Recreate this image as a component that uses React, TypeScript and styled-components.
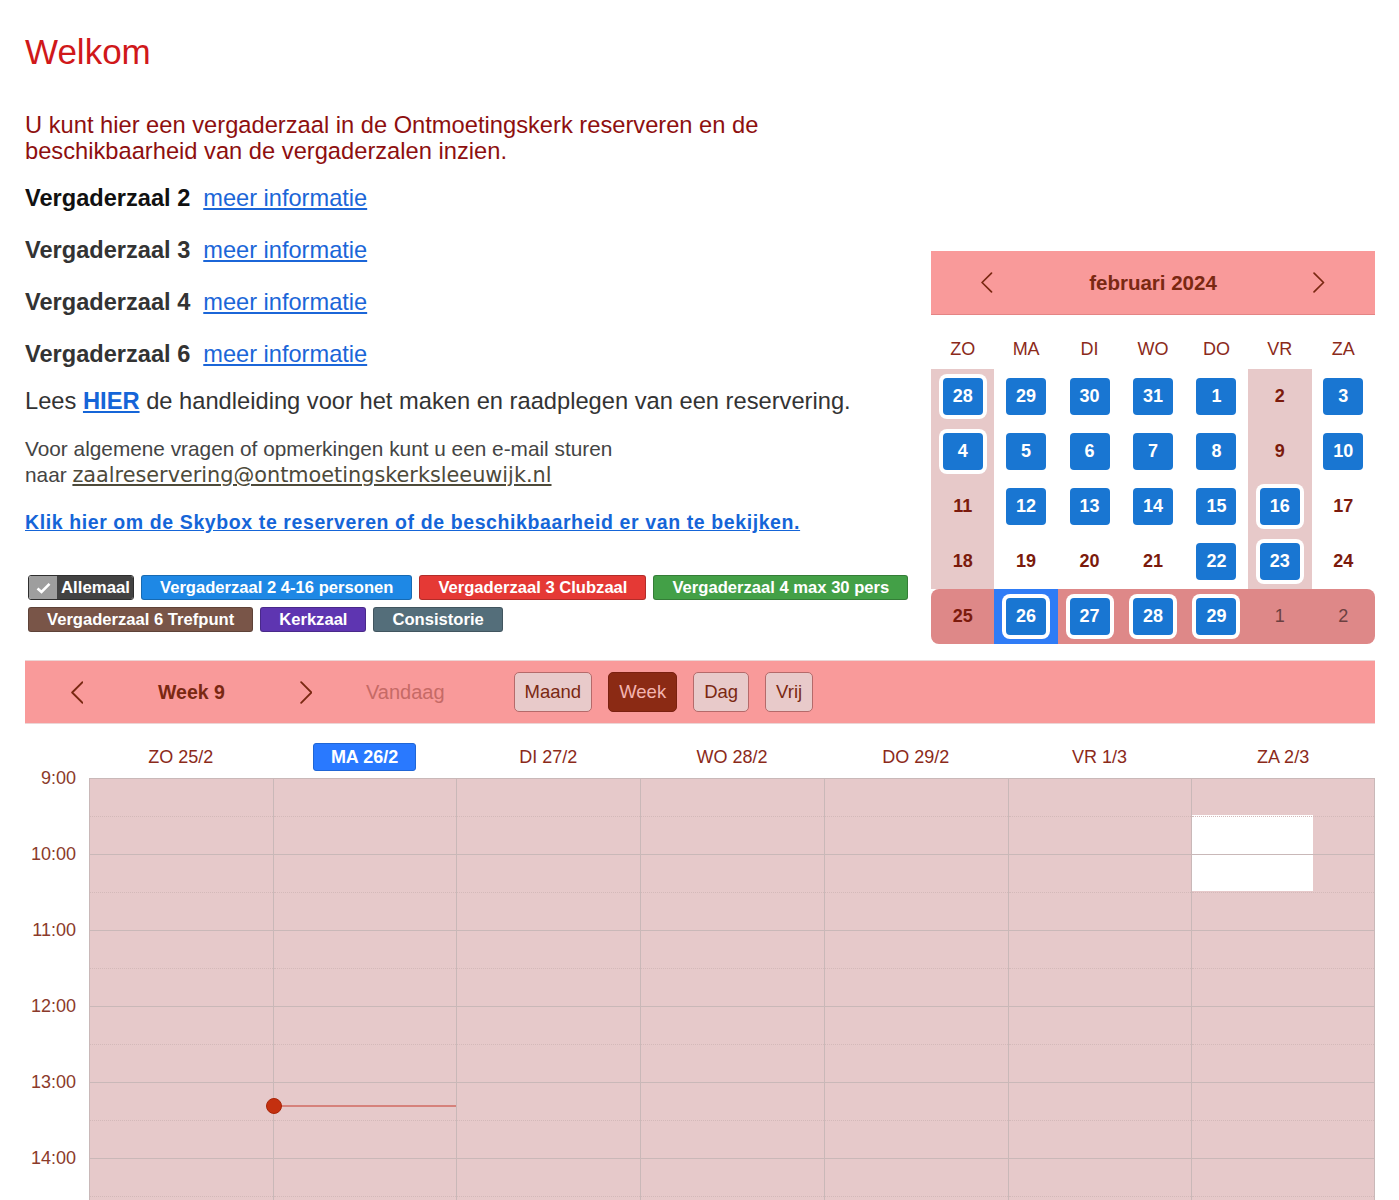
import React from "react";
import styled, { createGlobalStyle } from "styled-components";

const GlobalStyle = createGlobalStyle`
  html, body {
    margin: 0;
    padding: 0;
    background: #ffffff;
    font-family: "Liberation Sans", Arial, sans-serif;
  }
  * { box-sizing: border-box; }
`;

const Page = styled.div`
  padding: 0 24px 0 25px;
`;

const Top = styled.div`
  display: flex;
  align-items: flex-start;
`;

const Intro = styled.div`
  flex: 1;
  min-width: 0;
  padding-top: 32px;
`;

const Title = styled.h1`
  margin: 0;
  font-size: 35px;
  line-height: 40px;
  font-weight: normal;
  color: #d0181a;
`;

const Lead = styled.p`
  margin: 40px 0 0;
  font-size: 23.7px;
  line-height: 26px;
  color: #8e0f0f;
`;

const RoomRow = styled.div<{ $first?: boolean }>`
  margin-top: ${(p) => (p.$first ? 21 : 26)}px;
  font-size: 23.6px;
  line-height: 26px;
  display: flex;
  gap: 13px;
`;

const RoomName = styled.b<{ $dark?: boolean }>`
  color: ${(p) => (p.$dark ? "#111111" : "#333333")};
`;

const InfoLink = styled.a`
  color: #1b66d8;
  text-decoration: underline;
`;

const Manual = styled.p`
  margin: 20px 0 0;
  font-size: 23.7px;
  line-height: 28px;
  color: #333333;
`;

const StrongLink = styled.a`
  color: #1565d8;
  font-weight: bold;
  text-decoration: underline;
`;

const Contact = styled.p`
  margin: 21px 0 0;
  font-size: 20.8px;
  line-height: 26px;
  color: #444444;
`;

const MailLink = styled.a`
  font-family: "DejaVu Sans", Verdana, sans-serif;
  font-size: 20.8px;
  color: #4d4a3a;
  text-decoration: underline;
`;

const Skybox = styled.a`
  display: block;
  margin-top: 21px;
  font-size: 19.5px;
  line-height: 26px;
  font-weight: bold;
  letter-spacing: 0.6px;
  color: #1565d8;
  text-decoration: underline;
`;

const Chips = styled.div`
  margin-top: 40px;
  padding-left: 3px;
  display: flex;
  flex-wrap: wrap;
  gap: 7px;
`;

const Chip = styled.span<{ $bg: string }>`
  display: inline-flex;
  align-items: center;
  height: 25px;
  padding: 0 18px;
  background: ${(p) => p.$bg};
  border: 1px solid rgba(0, 0, 0, 0.22);
  border-radius: 3px;
  color: #ffffff;
  font-size: 16.6px;
  font-weight: bold;
  white-space: nowrap;
`;

const AllChip = styled.span`
  display: inline-flex;
  height: 25px;
  border: 1px solid #2e2e2e;
  border-radius: 3px;
  overflow: hidden;
  color: #ffffff;
  font-size: 16.8px;
  font-weight: bold;
`;

const CheckPart = styled.span`
  width: 28px;
  background: #9e9e9e;
  display: flex;
  align-items: center;
  justify-content: center;
`;

const AllLabel = styled.span`
  background: #424242;
  padding: 0 3px 0 4px;
  display: flex;
  align-items: center;
`;

/* mini month calendar */

const Month = styled.div`
  width: 444px;
  flex-shrink: 0;
  margin-top: 251px;
`;

const MonthHead = styled.div`
  height: 64px;
  background: #f99a9a;
  border-bottom: 1px solid #e48484;
  display: flex;
  align-items: center;
  justify-content: space-between;
  padding: 0 42px;
`;

const MonthTitle = styled.span`
  font-size: 20.5px;
  font-weight: bold;
  color: #7a2812;
`;

const NavBtn = styled.span<{ $w: number }>`
  width: ${(p) => p.$w}px;
  display: flex;
  justify-content: center;
  align-items: center;
  color: #7a2812;
`;

const WeekdayRow = styled.div`
  height: 54px;
  display: grid;
  grid-template-columns: repeat(7, 1fr);
  align-items: end;
  padding-bottom: 10px;
`;

const Weekday = styled.span`
  text-align: center;
  font-size: 18px;
  line-height: 20px;
  color: #8b2a1a;
`;

const WeekRow = styled.div<{ $current?: boolean }>`
  height: 55px;
  display: grid;
  grid-template-columns: repeat(7, 1fr);
  background: ${(p) => (p.$current ? "#de8888" : "transparent")};
  border-radius: ${(p) => (p.$current ? "8px" : "0")};
  overflow: hidden;
`;

const DayCell = styled.div<{ $shade?: boolean; $selected?: boolean }>`
  display: flex;
  align-items: center;
  justify-content: center;
  background: ${(p) => (p.$selected ? "#2f7cf6" : p.$shade ? "#e7c9c9" : "transparent")};
`;

const DayBox = styled.span<{ $ring?: boolean }>`
  width: 40px;
  height: 37px;
  border-radius: 4px;
  background: #1976d2;
  color: #ffffff;
  font-size: 18px;
  font-weight: bold;
  display: flex;
  align-items: center;
  justify-content: center;
  box-shadow: ${(p) => (p.$ring ? "0 0 0 4px #ffffff" : "none")};
`;

const DayText = styled.span<{ $other?: boolean }>`
  font-size: 18px;
  font-weight: ${(p) => (p.$other ? "normal" : "bold")};
  color: ${(p) => (p.$other ? "#6b4040" : "#7b1a0c")};
`;

/* week view */

const Toolbar = styled.div`
  margin-top: 16px;
  height: 64px;
  background: #f99a9a;
  border-top: 1px solid #ecd6d6;
  border-bottom: 1px solid #ecd6d6;
  display: flex;
  align-items: center;
  padding-left: 32px;
`;

const WeekLabel = styled.span`
  width: 189px;
  text-align: center;
  font-size: 19.5px;
  font-weight: bold;
  color: #7a2812;
`;

const Today = styled.span`
  margin-left: 40px;
  font-size: 20px;
  color: #c66a66;
`;

const ViewButtons = styled.div`
  margin-left: 69px;
  display: flex;
  gap: 16px;
`;

const ViewButton = styled.span<{ $active?: boolean }>`
  height: 40px;
  padding: 0 10px;
  display: flex;
  align-items: center;
  font-size: 18.5px;
  border-radius: 5px;
  border: 1px solid ${(p) => (p.$active ? "#7a2010" : "#b56a6a")};
  background: ${(p) => (p.$active ? "#8b2a14" : "#e8caca")};
  color: ${(p) => (p.$active ? "#f3b4b0" : "#7a2812")};
`;

const HeadRow = styled.div`
  height: 54px;
  display: grid;
  grid-template-columns: 64px repeat(7, 1fr);
  align-items: end;
  padding-bottom: 7px;
`;

const DayHead = styled.span<{ $today?: boolean }>`
  justify-self: center;
  height: 28px;
  display: flex;
  align-items: center;
  padding: 0 ${(p) => (p.$today ? 17 : 0)}px;
  border-radius: 3px;
  font-size: 18px;
  font-weight: ${(p) => (p.$today ? "bold" : "normal")};
  background: ${(p) => (p.$today ? "#2979ff" : "transparent")};
  border: ${(p) => (p.$today ? "1px solid #1f66d6" : "none")};
  color: ${(p) => (p.$today ? "#ffffff" : "#8b2a1a")};
`;

const Body = styled.div`
  display: grid;
  grid-template-columns: 64px repeat(7, 1fr);
`;

const Times = styled.div`
  display: flex;
  flex-direction: column;
  gap: 56px;
  margin-top: -10px;
  padding-right: 13px;
`;

const TimeLabel = styled.span`
  height: 20px;
  line-height: 20px;
  text-align: right;
  font-size: 18px;
  color: #8b3a2a;
`;

const DayCol = styled.div<{ $last?: boolean }>`
  position: relative;
  background: #e6c9ca;
  border-top: 1px solid #c9b8b8;
  border-left: 1px solid #c9b8b8;
  border-right: ${(p) => (p.$last ? "1px solid #c9b8b8" : "none")};
`;

const Slot = styled.div<{ $half?: boolean }>`
  position: relative;
  z-index: 1;
  height: 38px;
  border-bottom: 1px ${(p) => (p.$half ? "dotted #d3b9b9" : "solid #c9b8b8")};
`;

const FreeBlock = styled.div`
  position: absolute;
  left: 0;
  top: 36px;
  width: 66.5%;
  height: 76px;
  background: #ffffff;
`;

const NowLine = styled.div`
  position: absolute;
  z-index: 2;
  left: 0;
  right: 0;
  top: 326px;
  height: 2px;
  background: #d6817b;
`;

const NowDot = styled.span`
  position: absolute;
  left: -8px;
  top: -7px;
  width: 16px;
  height: 16px;
  border-radius: 50%;
  background: #c4300f;
  border: 1px solid #a82408;
`;

const Chevron = ({ dir, h }: { dir: "left" | "right"; h: number }) => (
  <svg width={h * 0.55} height={h} viewBox="0 0 11 20" fill="none">
    <polyline
      points={dir === "left" ? "10,1 1,10 10,19" : "1,1 10,10 1,19"}
      stroke="currentColor"
      strokeWidth="1.6"
      strokeLinecap="round"
      strokeLinejoin="round"
    />
  </svg>
);

type Day = { n: number; box?: boolean; ring?: boolean; other?: boolean };

const monthWeeks: Day[][] = [
  [{ n: 28, box: true, ring: true }, { n: 29, box: true }, { n: 30, box: true }, { n: 31, box: true }, { n: 1, box: true }, { n: 2 }, { n: 3, box: true }],
  [{ n: 4, box: true, ring: true }, { n: 5, box: true }, { n: 6, box: true }, { n: 7, box: true }, { n: 8, box: true }, { n: 9 }, { n: 10, box: true }],
  [{ n: 11 }, { n: 12, box: true }, { n: 13, box: true }, { n: 14, box: true }, { n: 15, box: true }, { n: 16, box: true, ring: true }, { n: 17 }],
  [{ n: 18 }, { n: 19 }, { n: 20 }, { n: 21 }, { n: 22, box: true }, { n: 23, box: true, ring: true }, { n: 24 }],
  [{ n: 25 }, { n: 26, box: true, ring: true }, { n: 27, box: true, ring: true }, { n: 28, box: true, ring: true }, { n: 29, box: true, ring: true }, { n: 1, other: true }, { n: 2, other: true }],
];

const rooms = [
  { name: "Vergaderzaal 2", dark: true },
  { name: "Vergaderzaal 3" },
  { name: "Vergaderzaal 4" },
  { name: "Vergaderzaal 6" },
];

const filters = [
  { label: "Vergaderzaal 2 4-16 personen", bg: "#1e88e5" },
  { label: "Vergaderzaal 3 Clubzaal", bg: "#e53935" },
  { label: "Vergaderzaal 4 max 30 pers", bg: "#43a047" },
  { label: "Vergaderzaal 6 Trefpunt", bg: "#795548" },
  { label: "Kerkzaal", bg: "#5e35b1" },
  { label: "Consistorie", bg: "#546e7a" },
];

const weekDays = ["ZO 25/2", "MA 26/2", "DI 27/2", "WO 28/2", "DO 29/2", "VR 1/3", "ZA 2/3"];
// labels shown within the visible part; the grid itself runs a bit further
const hours = ["9:00", "10:00", "11:00", "12:00", "13:00", "14:00"];
const slotCount = 14;

function App() {
  return (
    <Page>
      <GlobalStyle />
      <Top>
        <Intro>
          <Title>Welkom</Title>
          <Lead>
            U kunt hier een vergaderzaal in de Ontmoetingskerk reserveren en de
            <br />
            beschikbaarheid van de vergaderzalen inzien.
          </Lead>
          {rooms.map((r, i) => (
            <RoomRow key={r.name} $first={i === 0}>
              <RoomName $dark={r.dark}>{r.name}</RoomName>
              <InfoLink href="#">meer informatie</InfoLink>
            </RoomRow>
          ))}
          <Manual>
            Lees <StrongLink href="#">HIER</StrongLink> de handleiding voor het maken en raadplegen van een reservering.
          </Manual>
          <Contact>
            Voor algemene vragen of opmerkingen kunt u een e-mail sturen
            <br />
            naar <MailLink href="#">zaalreservering@ontmoetingskerksleeuwijk.nl</MailLink>
          </Contact>
          <Skybox href="#">Klik hier om de Skybox te reserveren of de beschikbaarheid er van te bekijken.</Skybox>
          <Chips>
            <AllChip>
              <CheckPart>
                <svg width="15" height="12" viewBox="0 0 15 12">
                  <polyline points="1.5,6.5 5.5,10 13.5,1.8" fill="none" stroke="#ffffff" strokeWidth="2.6" />
                </svg>
              </CheckPart>
              <AllLabel>Allemaal</AllLabel>
            </AllChip>
            {filters.map((f) => (
              <Chip key={f.label} $bg={f.bg}>
                {f.label}
              </Chip>
            ))}
          </Chips>
        </Intro>

        <Month>
          <MonthHead>
            <NavBtn $w={28}>
              <Chevron dir="left" h={21} />
            </NavBtn>
            <MonthTitle>februari 2024</MonthTitle>
            <NavBtn $w={28}>
              <Chevron dir="right" h={21} />
            </NavBtn>
          </MonthHead>
          <WeekdayRow>
            {["ZO", "MA", "DI", "WO", "DO", "VR", "ZA"].map((d) => (
              <Weekday key={d}>{d}</Weekday>
            ))}
          </WeekdayRow>
          {monthWeeks.map((week, wi) => (
            <WeekRow key={wi} $current={wi === 4}>
              {week.map((d, di) => (
                <DayCell key={di} $shade={wi < 4 && (di === 0 || di === 5)} $selected={wi === 4 && di === 1}>
                  {d.box ? <DayBox $ring={d.ring}>{d.n}</DayBox> : <DayText $other={d.other}>{d.n}</DayText>}
                </DayCell>
              ))}
            </WeekRow>
          ))}
        </Month>
      </Top>

      <Toolbar>
        <NavBtn $w={40}>
          <Chevron dir="left" h={23} />
        </NavBtn>
        <WeekLabel>Week 9</WeekLabel>
        <NavBtn $w={40}>
          <Chevron dir="right" h={23} />
        </NavBtn>
        <Today>Vandaag</Today>
        <ViewButtons>
          <ViewButton>Maand</ViewButton>
          <ViewButton $active>Week</ViewButton>
          <ViewButton>Dag</ViewButton>
          <ViewButton>Vrij</ViewButton>
        </ViewButtons>
      </Toolbar>

      <HeadRow>
        <span />
        {weekDays.map((d, i) => (
          <DayHead key={d} $today={i === 1}>
            {d}
          </DayHead>
        ))}
      </HeadRow>

      <Body>
        <Times>
          {hours.map((h) => (
            <TimeLabel key={h}>{h}</TimeLabel>
          ))}
        </Times>
        {weekDays.map((d, ci) => (
          <DayCol key={d} $last={ci === 6}>
            {ci === 6 && <FreeBlock />}
            {ci === 1 && (
              <NowLine>
                <NowDot />
              </NowLine>
            )}
            {Array.from({ length: slotCount }, (_, si) => (
              <Slot key={si} $half={si % 2 === 0} />
            ))}
          </DayCol>
        ))}
      </Body>
    </Page>
  );
}

export default App;
